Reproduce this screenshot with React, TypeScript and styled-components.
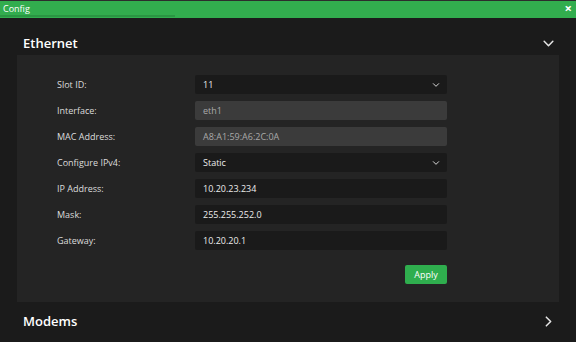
import React from "react";
import styled, { createGlobalStyle } from "styled-components";

const GlobalStyle = createGlobalStyle`
  html, body {
    margin: 0;
    padding: 0;
    background: #1b1b1b;
    font-family: "Open Sans", "Noto Sans", sans-serif;
  }
`;

const Window = styled.div`
  width: 576px;
  height: 342px;
  overflow: hidden;
  background-color: #1b1b1b;
  border-top: 1px solid #2c2c2c;
  box-sizing: border-box;
  display: flex;
  flex-direction: column;
`;

const TitleBar = styled.div`
  position: relative;
  height: 17px;
  flex-shrink: 0;
  background-color: #32ad4e;
  display: flex;
  align-items: center;
  justify-content: space-between;
  padding: 0 4px 2px 3px;
  box-sizing: border-box;
  color: #fff;
  font-size: 9px;
`;

const TitleProgress = styled.div`
  position: absolute;
  left: 0;
  bottom: 1px;
  width: 175px;
  height: 2px;
  background-color: #2a9643;
`;

const CloseBtn = styled.span`
  font-size: 13px;
  font-weight: 700;
  line-height: 1;
  cursor: pointer;
`;

const Body = styled.div`
  display: flex;
  flex-direction: column;
  padding: 0 17px;
`;

const SectionHeader = styled.div<{ $top: number }>`
  display: flex;
  align-items: center;
  justify-content: space-between;
  height: 24px;
  padding: 0 4px 0 6px;
  margin-top: ${(p) => p.$top}px;
  color: #fff;
  font-size: 13px;
  font-weight: 600;
`;

const Panel = styled.div`
  background-color: #242424;
  padding: 20px 0 18px 40px;
  display: flex;
  flex-direction: column;
`;

const Form = styled.div`
  display: grid;
  grid-template-columns: 138px 252px;
  row-gap: 7px;
  align-items: center;
`;

const Label = styled.div`
  color: #dcdcdc;
  font-size: 9px;
`;

const Field = styled.div<{ $disabled?: boolean }>`
  height: 19px;
  box-sizing: border-box;
  border-radius: 2px;
  background-color: ${(p) => (p.$disabled ? "#3b3b3b" : "#1a1a1a")};
  color: ${(p) => (p.$disabled ? "#a9a9a9" : "#ececec")};
  font-size: 9px;
  display: flex;
  align-items: center;
  justify-content: space-between;
  padding: 0 7px 0 8px;
`;

const Actions = styled.div`
  width: 390px;
  display: flex;
  justify-content: flex-end;
  margin-top: 15px;
`;

const ApplyButton = styled.button`
  width: 42px;
  height: 19px;
  border: none;
  border-radius: 2px;
  background-color: #2fae4e;
  color: #fff;
  font-family: inherit;
  font-size: 9px;
  padding: 0;
  cursor: pointer;
`;

const Chevron = ({ dir, size }: { dir: "down" | "right"; size: number }) => (
  <svg width={size} height={size} viewBox="0 0 12 12" fill="none">
    <path
      d={dir === "down" ? "M2 4 L6 8 L10 4" : "M4 2 L8 6 L4 10"}
      stroke="#e6e6e6"
      strokeWidth="1.4"
      strokeLinecap="round"
      strokeLinejoin="round"
    />
  </svg>
);

const rows: { label: string; value: string; select?: boolean; disabled?: boolean }[] = [
  { label: "Slot ID:", value: "11", select: true },
  { label: "Interface:", value: "eth1", disabled: true },
  { label: "MAC Address:", value: "A8:A1:59:A6:2C:0A", disabled: true },
  { label: "Configure IPv4:", value: "Static", select: true },
  { label: "IP Address:", value: "10.20.23.234" },
  { label: "Mask:", value: "255.255.252.0" },
  { label: "Gateway:", value: "10.20.20.1" },
];

export default function App() {
  return (
    <>
      <GlobalStyle />
      <Window>
        <TitleBar>
          <span>Config</span>
          <CloseBtn>×</CloseBtn>
          <TitleProgress />
        </TitleBar>
        <Body>
          <SectionHeader $top={13}>
            <span>Ethernet</span>
            <Chevron dir="down" size={13} />
          </SectionHeader>
          <Panel>
            <Form>
              {rows.map((r) => (
                <React.Fragment key={r.label}>
                  <Label>{r.label}</Label>
                  <Field $disabled={r.disabled}>
                    <span>{r.value}</span>
                    {r.select && <Chevron dir="down" size={8} />}
                  </Field>
                </React.Fragment>
              ))}
            </Form>
            <Actions>
              <ApplyButton>Apply</ApplyButton>
            </Actions>
          </Panel>
          <SectionHeader $top={7}>
            <span>Modems</span>
            <Chevron dir="right" size={13} />
          </SectionHeader>
        </Body>
      </Window>
    </>
  );
}
